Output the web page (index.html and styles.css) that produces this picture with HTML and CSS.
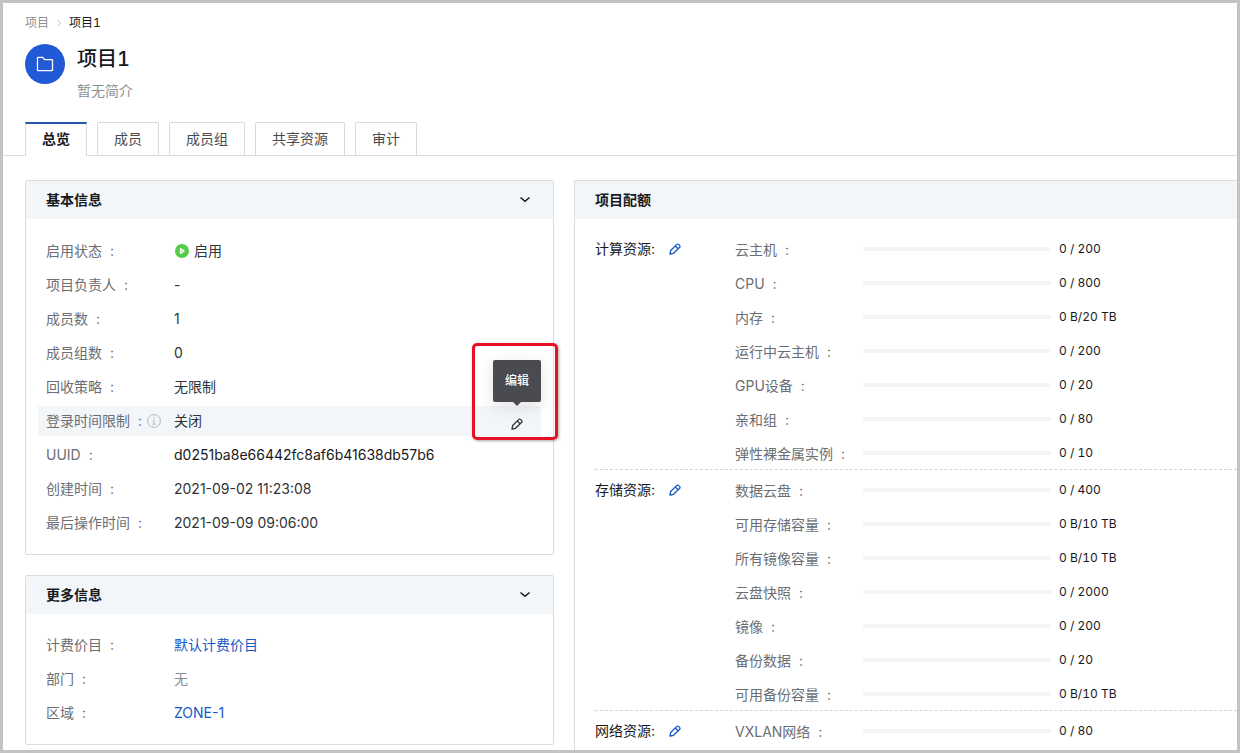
FILE: index.html
```html
<!DOCTYPE html>
<html lang="zh-CN">
<head>
<meta charset="utf-8">
<title>项目1</title>
<link rel="stylesheet" href="styles.css">
</head>
<body>
<svg class="symbols" aria-hidden="true">
  <symbol id="pencil" viewBox="0 0 12 12"><path d="M1 11l.7-3.5 5.9-5.9a1.5 1.5 0 0 1 2.1 0l.8.8a1.5 1.5 0 0 1 0 2.100L4.500 10.300zM6.300 3l2.800 2.800" fill="none" stroke="currentColor" stroke-width="1.300" stroke-linejoin="round"/></symbol>
  <symbol id="chevron" viewBox="0 0 12 12"><path d="M1.500 3.500L6 7.300 10.500 3.500" fill="none" stroke="currentColor" stroke-width="1.500"/></symbol>
</svg>
<div class="page">
  <header class="header">
    <nav class="breadcrumb" aria-label="面包屑">
      <a href="#">项目</a>
      <svg class="separator" viewBox="0 0 6 8" aria-hidden="true"><path d="M1.500 1l3 3-3 3" fill="none" stroke="currentColor"/></svg>
      <span class="current">项目1</span>
    </nav>
    <div class="identity">
      <span class="avatar"><svg viewBox="0 0 18 18" aria-hidden="true"><path d="M1.500 15V3q0-.7.7-.7h4.400l2 2.300h7.200q.7 0 .7.700V15q0 .7-.7.700H2.200q-.7 0-.7-.7z" fill="none" stroke="currentColor" stroke-width="1.300" stroke-linejoin="round"/></svg></span>
      <div class="names">
        <h1 class="title">项目1</h1>
        <p class="summary">暂无简介</p>
      </div>
    </div>
  </header>
  <div class="tabs" role="tablist">
    <button class="tab active" role="tab" aria-selected="true">总览</button>
    <button class="tab" role="tab">成员</button>
    <button class="tab" role="tab">成员组</button>
    <button class="tab" role="tab">共享资源</button>
    <button class="tab" role="tab">审计</button>
  </div>
  <main class="content">
    <div class="column">
      <section class="panel">
        <header class="panel-head"><h2>基本信息</h2><button class="icon-button" aria-label="收起基本信息"><svg><use href="#chevron"/></svg></button></header>
        <dl class="fields">
          <div class="field status"><dt class="name">启用状态</dt><dd><svg class="running" viewBox="0 0 14 14" aria-hidden="true"><circle cx="7" cy="7" r="7" fill="#52cc4a"/><path d="M5.500 4.600v4.800L9.200 7z" fill="#8fdf8a" stroke="#fff" stroke-width="1.200" stroke-linejoin="round"/></svg>启用</dd></div>
          <div class="field"><dt class="name">项目负责人</dt><dd>-</dd></div>
          <div class="field"><dt class="name">成员数</dt><dd>1</dd></div>
          <div class="field"><dt class="name">成员组数</dt><dd>0</dd></div>
          <div class="field"><dt class="name">回收策略</dt><dd>无限制</dd></div>
          <div class="field hovered">
            <dt class="name">登录时间限制</dt>
            <dd><svg class="info" viewBox="0 0 14 14" aria-hidden="true"><circle cx="7" cy="7" r="6.400" fill="none" stroke="currentColor"/><path d="M7 3.500v1.200M5.800 6.200H7v4M5.500 10.200h3" fill="none" stroke="currentColor"/></svg>关闭
              <button class="icon-button edit" aria-label="编辑登录时间限制"><svg><use href="#pencil"/></svg></button>
              <span class="tooltip" role="tooltip">编辑</span>
              <span class="callout"></span>
            </dd>
          </div>
          <div class="field"><dt class="name">UUID</dt><dd class="strong">d0251ba8e66442fc8af6b41638db57b6</dd></div>
          <div class="field"><dt class="name">创建时间</dt><dd>2021-09-02 11:23:08</dd></div>
          <div class="field"><dt class="name">最后操作时间</dt><dd>2021-09-09 09:06:00</dd></div>
        </dl>
      </section>
      <section class="panel">
        <header class="panel-head"><h2>更多信息</h2><button class="icon-button" aria-label="收起更多信息"><svg><use href="#chevron"/></svg></button></header>
        <dl class="fields">
          <div class="field"><dt class="name">计费价目</dt><dd><a href="#">默认计费价目</a></dd></div>
          <div class="field"><dt class="name">部门</dt><dd class="empty">无</dd></div>
          <div class="field"><dt class="name">区域</dt><dd><a href="#">ZONE-1</a></dd></div>
        </dl>
      </section>
    </div>
    <section class="panel quota">
      <header class="panel-head"><h2>项目配额</h2></header>
      <div class="groups">
        <section class="group">
          <h3 class="group-name">计算资源:<button class="icon-button link" aria-label="编辑计算资源"><svg><use href="#pencil"/></svg></button></h3>
          <div class="meters">
            <div class="meter"><label class="name" for="q1">云主机</label><progress id="q1" value="0" max="200"></progress><span>0 / 200</span></div>
            <div class="meter"><label class="name" for="q2">CPU</label><progress id="q2" value="0" max="800"></progress><span>0 / 800</span></div>
            <div class="meter"><label class="name" for="q3">内存</label><progress id="q3" value="0" max="20"></progress><span>0 B/20 TB</span></div>
            <div class="meter"><label class="name" for="q4">运行中云主机</label><progress id="q4" value="0" max="200"></progress><span>0 / 200</span></div>
            <div class="meter"><label class="name" for="q5">GPU设备</label><progress id="q5" value="0" max="20"></progress><span>0 / 20</span></div>
            <div class="meter"><label class="name" for="q6">亲和组</label><progress id="q6" value="0" max="80"></progress><span>0 / 80</span></div>
            <div class="meter"><label class="name" for="q7">弹性裸金属实例</label><progress id="q7" value="0" max="10"></progress><span>0 / 10</span></div>
          </div>
        </section>
        <section class="group">
          <h3 class="group-name">存储资源:<button class="icon-button link" aria-label="编辑存储资源"><svg><use href="#pencil"/></svg></button></h3>
          <div class="meters">
            <div class="meter"><label class="name" for="q8">数据云盘</label><progress id="q8" value="0" max="400"></progress><span>0 / 400</span></div>
            <div class="meter"><label class="name" for="q9">可用存储容量</label><progress id="q9" value="0" max="10"></progress><span>0 B/10 TB</span></div>
            <div class="meter"><label class="name" for="q10">所有镜像容量</label><progress id="q10" value="0" max="10"></progress><span>0 B/10 TB</span></div>
            <div class="meter"><label class="name" for="q11">云盘快照</label><progress id="q11" value="0" max="2000"></progress><span>0 / 2000</span></div>
            <div class="meter"><label class="name" for="q12">镜像</label><progress id="q12" value="0" max="200"></progress><span>0 / 200</span></div>
            <div class="meter"><label class="name" for="q13">备份数据</label><progress id="q13" value="0" max="20"></progress><span>0 / 20</span></div>
            <div class="meter"><label class="name" for="q14">可用备份容量</label><progress id="q14" value="0" max="10"></progress><span>0 B/10 TB</span></div>
          </div>
        </section>
        <section class="group">
          <h3 class="group-name">网络资源:<button class="icon-button link" aria-label="编辑网络资源"><svg><use href="#pencil"/></svg></button></h3>
          <div class="meters">
            <div class="meter"><label class="name" for="q15">VXLAN网络</label><progress id="q15" value="0" max="80"></progress><span>0 / 80</span></div>
          </div>
        </section>
      </div>
    </section>
  </main>
</div>
</body>
</html>
```
FILE: styles.css
```css
* { box-sizing: border-box; }

body, h1, h2, h3, p, dl, dd { margin: 0; }

body {
  color: #303338;
  font: 14px/22px Inter, "Noto Sans CJK SC", sans-serif;
}

button { padding: 0; border: 0; background: none; font: inherit; color: inherit; }

a { color: #1459c7; text-decoration: none; }

.symbols { display: none; }

.page {
  display: flex;
  flex-direction: column;
  height: 100vh;
  overflow: hidden;
  border: 3px solid #c3c3c3;
  background: #fff;
}

.header { padding: 11px 22px 0; font-variant-numeric: tabular-nums; }

.breadcrumb {
  display: flex;
  align-items: center;
  gap: 7px;
  font-size: 12px;
  line-height: 18px;
}

.breadcrumb a { color: #8c8f94; }
.breadcrumb .current { color: #17191c; }
.separator { width: 6px; height: 8px; color: #c4c6c9; }

.identity { display: flex; gap: 12px; padding-top: 12px; }

.avatar {
  display: flex;
  align-items: center;
  justify-content: center;
  width: 40px;
  height: 40px;
  border-radius: 50%;
  background: #2259d6;
  color: #fff;
}

.avatar svg { width: 18px; height: 18px; }
.title { font-size: 20px; line-height: 30px; font-weight: 500; color: #17191c; }
.summary { padding-top: 6px; color: #8c8f94; }

.tabs {
  display: flex;
  flex-shrink: 0;
  gap: 10px;
  margin-top: 20px;
  padding: 0 22px;
  border-bottom: 1px solid #d9dbde;
}

.tab {
  height: 33px;
  padding: 0 16px;
  border: 1px solid #d9dbde;
  border-bottom: 0;
  border-radius: 2px 2px 0 0;
  background: #fff;
  color: #494c50;
}

.tab.active {
  height: 34px;
  margin-bottom: -1px;
  padding-bottom: 2px;
  border-top: 2px solid #2356a5;
  border-radius: 0;
  color: #17191c;
  font-weight: 700;
}

.content {
  display: grid;
  grid-template-columns: minmax(0, 529fr) minmax(0, 663fr);
  align-items: start;
  gap: 20px;
  padding: 24px 0 0 22px;
}

.column { display: grid; gap: 20px; }

.panel { border: 1px solid #d9dbde; border-radius: 2px; }

.panel-head {
  display: flex;
  align-items: center;
  justify-content: space-between;
  height: 38px;
  padding: 0 20px;
  background: #f3f6f9;
  color: #17191c;
}

.panel-head h2 { font-size: 14px; font-weight: 700; }

.icon-button { display: flex; align-items: center; justify-content: center; }
.icon-button svg { width: 12px; height: 12px; }
.panel-head .icon-button { width: 16px; height: 16px; }

.fields { display: grid; gap: 4px; padding: 16px 12px; }

.field {
  display: grid;
  grid-template-columns: 128px minmax(0, 1fr);
  align-items: center;
  min-height: 30px;
  padding: 0 8px;
}

.field.status { min-height: 31px; }
.field dd { display: flex; align-items: center; }
.name { color: #6b6e73; }
.name::after { content: ":"; margin-left: 8px; }
.field .strong { color: #17191c; }
.field .empty { color: #8c8f94; }
.running { width: 14px; height: 14px; margin: 0 5px 0 1px; }

.hovered { position: relative; padding-right: 0; background: #f3f6f9; }
.info { width: 14px; height: 14px; margin: 0 13px 0 -27px; color: #b3b6ba; }
.edit { width: 48px; height: 30px; margin-left: auto; padding-top: 6px; }

.tooltip {
  position: absolute;
  right: 0;
  bottom: 34px;
  width: 48px;
  padding: 12px 0;
  border-radius: 2px;
  background: #494b50;
  box-shadow: 0 4px 16px #0000001f;
  color: #fff;
  font-size: 12px;
  line-height: 18px;
  font-weight: 500;
  text-align: center;
}

.tooltip::after {
  content: "";
  position: absolute;
  top: 100%;
  left: 20px;
  border: 4px solid transparent;
  border-top-color: #494b50;
  border-bottom: 0;
}

.callout {
  position: absolute;
  right: -17px;
  bottom: -4px;
  width: 86px;
  height: 97px;
  border: 3px solid #e81123;
  border-radius: 5px;
  box-shadow: 1px 1px 3px #00000059;
  pointer-events: none;
}

.quota { border-right: 0; border-radius: 2px 0 0 0; }
.groups { padding: 10px 0 20px 20px; }

.group {
  display: grid;
  grid-template-columns: 140px minmax(0, 1fr);
  align-items: start;
  padding: 5px 0 1px;
}

.group + .group { border-top: 1px dashed #d2d4d7; }

.group-name {
  display: flex;
  align-items: center;
  gap: 14px;
  height: 30px;
  color: #17191c;
  font-size: 14px;
  font-weight: 400;
}

.link { color: #1459c7; }
.meters { display: grid; gap: 4px; }

.meter {
  display: grid;
  grid-template-columns: 128px 188px 1fr;
  align-items: center;
  height: 30px;
}

.meter .name { padding-top: 2px; }
.meter span { padding-left: 8px; color: #17191c; font-size: 12px; font-variant-numeric: tabular-nums; }

progress {
  display: block;
  width: 100%;
  height: 4px;
  border: 0;
  border-radius: 2px;
  background: #f4f4f5;
  appearance: none;
}

progress::-webkit-progress-bar { border-radius: 2px; background: #f4f4f5; }
progress::-webkit-progress-value { background: #2259d6; }
```
